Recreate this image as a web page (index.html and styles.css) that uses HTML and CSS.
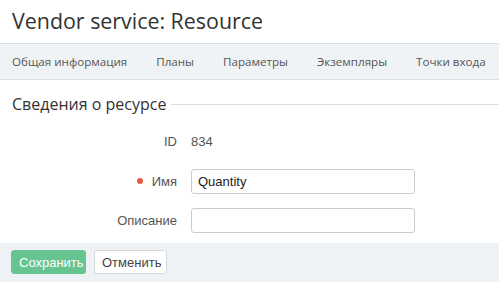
FILE: index.html
```html
<!DOCTYPE html>
<html lang="ru">
<head>
  <meta charset="UTF-8" />
  <title>Vendor service: Resource</title>
  <link rel="stylesheet" href="styles.css">
</head>
<body>
  <h1 class="page-title">Vendor service: Resource</h1>

  <nav class="tabs">
    <a class="tab" href="#">Общая информация</a>
    <a class="tab" href="#">Планы</a>
    <a class="tab" href="#">Параметры</a>
    <a class="tab" href="#">Экземпляры</a>
    <a class="tab" href="#">Точки входа</a>
  </nav>

  <section class="details">
    <div class="section-head">
      <span class="section-title">Сведения о ресурсе</span>
      <span class="section-line"></span>
    </div>

    <div class="form-grid">
      <div class="label">ID</div>
      <div class="value">834</div>

      <label class="label required" for="name">Имя</label>
      <input class="field" type="text" id="name" value="Quantity" />

      <label class="label" for="descr">Описание</label>
      <input class="field" type="text" id="descr" />
    </div>
  </section>

  <footer class="actions">
    <button class="btn btn-save">Сохранить</button>
    <button class="btn btn-cancel">Отменить</button>
  </footer>
</body>
</html>
```
FILE: styles.css
```css
/* Base */
body {
  margin: 0;
  font-family: 'Open Sans', sans-serif;
  color: #333;
  background: #fff;
  width: 499px;
  height: 282px;
  overflow: hidden;
  display: flex;
  flex-direction: column;
}

.page-title {
  margin: 0;
  height: 43px;
  padding: 6px 12px 0;
  box-sizing: border-box;
  font-size: 21.4px;
  font-weight: 400;
  line-height: 30px;
  color: #333;
}

/* Tabs */
.tabs {
  display: flex;
  gap: 29px;
  height: 37px;
  box-sizing: border-box;
  padding: 0 12px;
  align-items: center;
  background: #f0f3f6;
  border-top: 1px solid #d9dee3;
  border-bottom: 1px solid #d9dee3;
}
.tab {
  font-size: 11.6px;
  color: #555;
  text-decoration: none;
  white-space: nowrap;
}

/* Section */
.details {
  flex-grow: 1;
}
.section-head {
  display: flex;
  align-items: center;
  gap: 5px;
  padding: 12px 0 0 12px;
  height: 24px;
}
.section-title {
  font-size: 16px;
  line-height: 24px;
  color: #333;
}
.section-line {
  flex-grow: 1;
  border-top: 1px solid #d9dee3;
  margin-top: 1px;
}

.form-grid {
  display: grid;
  grid-template-columns: 165px 224px;
  column-gap: 14px;
  grid-template-rows: 27px 25px 25px;
  row-gap: 14px;
  margin: 12px 0 0 12px;
  font-family: 'Liberation Sans', Arial, sans-serif;
  font-size: 13px;
  align-items: center;
}
.form-grid .value {
  color: #555;
}
.form-grid .label {
  text-align: right;
  color: #555;
}
.form-grid .label.required::before {
  content: "";
  display: inline-block;
  width: 6px;
  height: 6px;
  border-radius: 50%;
  background: #e9573f;
  margin-right: 9px;
  vertical-align: 2px;
}
.field {
  height: 25px;
  box-sizing: border-box;
  border: 1px solid #c8cdd2;
  border-radius: 3px;
  padding: 0 6px;
  font-family: 'Liberation Sans', Arial, sans-serif;
  font-size: 13px;
  color: #222;
  outline: none;
}

/* Footer buttons */
.actions {
  height: 39px;
  box-sizing: border-box;
  background: #eff2f5;
  display: flex;
  gap: 8px;
  align-items: flex-start;
  padding: 7px 11px 0;
}
.btn {
  height: 24px;
  font-family: 'Liberation Sans', Arial, sans-serif;
  font-size: 13px;
  border-radius: 3px;
  padding: 0 7px;
  cursor: pointer;
}
.btn-save {
  width: 75px;
  background: #66c491;
  color: #fff;
  border: 1px solid #66c491;
}
.btn-cancel {
  width: 73px;
  background: #fff;
  color: #444;
  border: 1px solid #d4d8dc;
}
```
